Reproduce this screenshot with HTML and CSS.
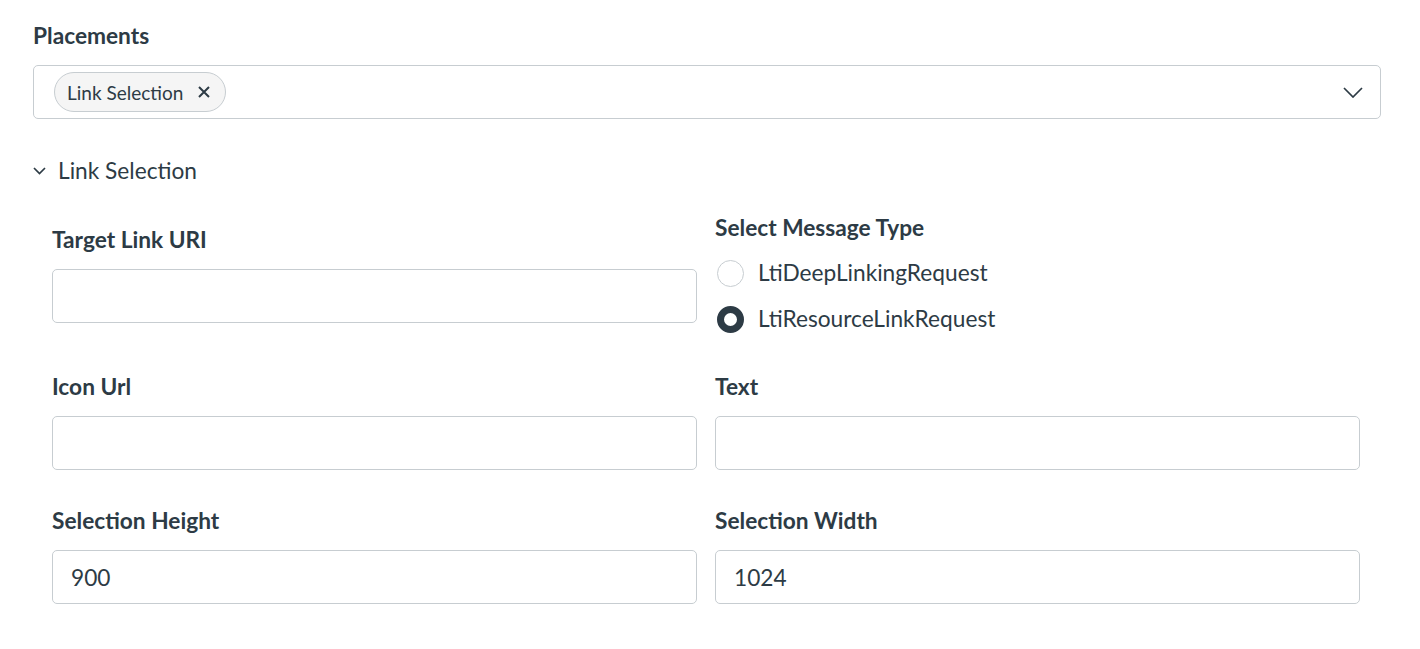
FILE: index.html
```html
<!DOCTYPE html>
<html lang="en">

<head>
    <meta charset="UTF-8">
    <meta name="viewport" content="width=device-width, initial-scale=1.0">
    <title>Placements</title>
    <link rel="stylesheet" href="styles.css">
</head>

<body>

    <main class="page">
        <div class="field">
            <span class="label">Placements</span>
            <div class="multi-select">
                <span class="tag">
                    Link Selection
                    <svg class="tag-close" width="12" height="12" viewBox="0 0 12 12">
                        <path d="M1 1 L11 11 M11 1 L1 11" />
                    </svg>
                </span>
                <svg class="select-arrow" width="20" height="11" viewBox="0 0 20 11">
                    <path d="M1 1 L10 10 L19 1" />
                </svg>
            </div>
        </div>

        <section class="placement">
            <button class="toggle" type="button">
                <svg width="13" height="8" viewBox="0 0 13 8">
                    <path d="M1 1 L6.5 6.5 L12 1" />
                </svg>
                Link Selection
            </button>

            <div class="placement-grid">
                <div class="field field-offset">
                    <label class="label" for="targetUri">Target Link URI</label>
                    <input class="text-input" type="text" id="targetUri">
                </div>

                <div class="radio-group">
                    <span class="label">Select Message Type</span>
                    <label class="radio">
                        <input type="radio" name="messageType" value="deep">
                        LtiDeepLinkingRequest
                    </label>
                    <label class="radio">
                        <input type="radio" name="messageType" value="resource" checked>
                        LtiResourceLinkRequest
                    </label>
                </div>

                <div class="field">
                    <label class="label" for="iconUrl">Icon Url</label>
                    <input class="text-input" type="text" id="iconUrl">
                </div>

                <div class="field">
                    <label class="label" for="linkText">Text</label>
                    <input class="text-input" type="text" id="linkText">
                </div>

                <div class="field">
                    <label class="label" for="selHeight">Selection Height</label>
                    <input class="text-input" type="text" id="selHeight" value="900">
                </div>

                <div class="field">
                    <label class="label" for="selWidth">Selection Width</label>
                    <input class="text-input" type="text" id="selWidth" value="1024">
                </div>
            </div>
        </section>
    </main>

</body>

</html>
```

FILE: styles.css
```css
body {
    margin: 0;
    font-family: Lato, "Open Sans", sans-serif;
    color: #2d3b45;
    background: #fff;
}

.page {
    padding: 19px 39px 0 33px;
}

.label {
    display: block;
    font-size: 22.7px;
    font-weight: 700;
    line-height: 34px;
    margin-bottom: 12px;
}

.multi-select {
    display: flex;
    align-items: center;
    justify-content: space-between;
    height: 54px;
    padding: 0 17px 0 20px;
    border: 1px solid #c7cdd1;
    border-radius: 5px;
    box-sizing: border-box;
}

.tag {
    display: inline-flex;
    align-items: center;
    gap: 15px;
    height: 40px;
    padding: 0 15px 0 12px;
    font-size: 19px;
    background: #f5f5f5;
    border: 1px solid #c7cdd1;
    border-radius: 20px;
    box-sizing: border-box;
}

.select-arrow path,
.toggle path {
    fill: none;
    stroke: #2d3b45;
    stroke-width: 1.7;
}

.tag-close path {
    fill: none;
    stroke: #2d3b45;
    stroke-width: 2;
}

.toggle {
    display: flex;
    align-items: center;
    gap: 12px;
    margin-top: 35px;
    padding: 0;
    border: none;
    background: none;
    color: inherit;
    font-family: inherit;
    font-size: 22.7px;
    line-height: 34px;
    cursor: pointer;
}

.placement-grid {
    display: grid;
    grid-template-columns: 1fr 1fr;
    column-gap: 18px;
    row-gap: 34px;
    align-items: start;
    margin-top: 23px;
    padding: 0 21px 0 19px;
}

/* label sits a bit lower than the radio group heading */
.field-offset {
    margin-top: 12px;
}

.text-input {
    display: block;
    width: 100%;
    height: 54px;
    padding: 0 18px;
    border: 1px solid #c7cdd1;
    border-radius: 5px;
    box-sizing: border-box;
    font-family: inherit;
    font-size: 22.7px;
    color: #2d3b45;
}

.radio-group .label {
    margin-bottom: 11px;
}

.radio {
    display: flex;
    align-items: center;
    gap: 14px;
    font-size: 22.7px;
    line-height: 34px;
}

.radio + .radio {
    margin-top: 12px;
}

.radio input {
    appearance: none;
    width: 27px;
    height: 27px;
    margin: 0 0 0 2px;
    border: 1.5px solid #c7cdd1;
    border-radius: 50%;
    background: #fff;
    box-sizing: border-box;
}

.radio input:checked {
    border: 7px solid #2d3b45;
}
```
